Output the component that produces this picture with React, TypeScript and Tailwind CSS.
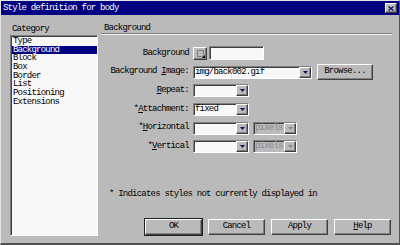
import React from 'react';

const raised =
  'border border-t-white border-l-white border-b-[#404040] border-r-[#404040] shadow-[inset_-1px_-1px_0_#808080]';
const sunken =
  'border border-t-[#808080] border-l-[#808080] border-b-white border-r-white shadow-[inset_1px_1px_0_#404040]';

const CATEGORIES = ['Type', 'Background', 'Block', 'Box', 'Border', 'List', 'Positioning', 'Extensions'];

function Arrow({ disabled }: { disabled?: boolean }) {
  return (
    <div className={`w-[12px] h-full bg-[#bababa] flex items-center justify-center ${raised}`}>
      <svg width="5" height="3" viewBox="0 0 5 3">
        <polygon points="0,0 5,0 2.5,3" fill={disabled ? '#8a8a8a' : '#10106a'} />
      </svg>
    </div>
  );
}

function Select({ value, width, disabled }: { value?: string; width: string; disabled?: boolean }) {
  return (
    <div
      className={`${width} h-[13px] flex items-stretch ${sunken} ${
        disabled ? 'bg-[#bababa] text-[#8a8a8a]' : 'bg-[#f8f8f8] text-black'
      }`}
    >
      <div className="flex-1 pl-[1px] leading-[11px] overflow-hidden whitespace-nowrap">{value}</div>
      <Arrow disabled={disabled} />
    </div>
  );
}

function Label({ children }: { children: React.ReactNode }) {
  return <div className="w-[88px] text-right whitespace-nowrap">{children}</div>;
}

function Row({ children }: { children: React.ReactNode }) {
  return <div className="h-[18.7px] flex items-center">{children}</div>;
}

function Btn({ children, isDefault }: { children: React.ReactNode; isDefault?: boolean }) {
  return (
    <div
      className={`w-[57px] h-[16px] flex items-center justify-center bg-[#bababa] ${
        isDefault ? 'outline outline-1 outline-[#202020]' : ''
      } ${raised}`}
    >
      {children}
    </div>
  );
}

export default function App() {
  return (
    <div className="w-[400px] h-[245px] bg-[#bababa] border-t border-l border-t-[#e4e4e4] border-l-[#e4e4e4] border-r border-r-[#505050] border-b-2 border-b-[#505050] font-['Liberation_Mono',monospace] text-[9px] tracking-[-0.78px] text-black flex flex-col overflow-hidden">
      {/* Title bar */}
      <div className="h-[14px] bg-[#000080] flex items-center justify-between pl-[2px] pr-[2px] shrink-0">
        <span className="text-white leading-[14px]">Style definition for body</span>
        <div className={`w-[12px] h-[10px] bg-[#c4c4c4] flex items-center justify-center ${raised}`}>
          <svg width="6" height="5" viewBox="0 0 6 5">
            <path d="M0.5 0.5 L5.5 4.5 M5.5 0.5 L0.5 4.5" stroke="#10106a" strokeWidth="1.4" />
          </svg>
        </div>
      </div>

      <div className="flex pl-[9px]">
        {/* Category column */}
        <div className="w-[88px] flex flex-col">
          <div className="mt-[8px] h-[12px] leading-[12px] pl-[2px]">Category</div>
          <div className={`h-[201px] bg-[#f8f8f8] pl-[1px] pt-[1px] ${sunken}`}>
            {CATEGORIES.map((c) => (
              <div
                key={c}
                className={`h-[8.7px] leading-[8.7px] pl-[1px] whitespace-nowrap ${
                  c === 'Background' ? 'bg-[#000080] text-white' : ''
                }`}
              >
                {c}
              </div>
            ))}
          </div>
        </div>

        {/* Panel */}
        <div className="ml-[3px] w-[291px] flex flex-col">
          <div className="mt-[8px] h-[10px] leading-[10px] pl-[3px]">Background</div>
          <div className="h-[2px] border-t border-t-[#808080] border-b border-b-[#f0f0f0]" />

          <div className="mt-[9px] flex flex-col">
            <Row>
              <Label>Background</Label>
              <div className={`ml-[4px] w-[14px] h-[13px] bg-[#bababa] relative flex items-center justify-center ${raised}`}>
                <div className="w-[7px] h-[7px] border border-[#808080]" />
                <svg className="absolute right-[1px] bottom-[1px]" width="3" height="3" viewBox="0 0 3 3">
                  <polygon points="3,0 3,3 0,3" fill="#000" />
                </svg>
              </div>
              <div className={`ml-[2px] w-[55px] h-[14px] bg-[#f8f8f8] ${sunken}`} />
            </Row>
            <Row>
              <Label>
                Background <span className="underline">I</span>mage:
              </Label>
              <div className="ml-[4px]">
                <Select value="img/back002.gif" width="w-[119px]" />
              </div>
              <div className={`ml-[5px] w-[56px] h-[16px] flex items-center justify-center bg-[#bababa] border-r-[#10106a] ${raised}`}>
                Browse...
              </div>
            </Row>
            <Row>
              <Label>
                <span className="underline">R</span>epeat:
              </Label>
              <div className="ml-[4px]">
                <Select width="w-[56px]" />
              </div>
            </Row>
            <Row>
              <Label>
                *<span className="underline">A</span>ttachment:
              </Label>
              <div className="ml-[4px]">
                <Select value="fixed" width="w-[56px]" />
              </div>
            </Row>
            <Row>
              <Label>
                *<span className="underline">H</span>orizontal
              </Label>
              <div className="ml-[4px] flex gap-[4px]">
                <Select width="w-[56px]" />
                <Select value="pixels" width="w-[44px]" disabled />
              </div>
            </Row>
            <Row>
              <Label>
                *<span className="underline">V</span>ertical
              </Label>
              <div className="ml-[4px] flex gap-[4px]">
                <Select width="w-[56px]" />
                <Select value="pixels" width="w-[44px]" disabled />
              </div>
            </Row>
          </div>

          <div className="mt-[33px] h-[10px] leading-[10px] pl-[8px] whitespace-nowrap">
            * Indicates styles not currently displayed in
          </div>

          <div className="mt-[20px] flex justify-end gap-[6px] pr-[1px]">
            <Btn isDefault>OK</Btn>
            <Btn>Cancel</Btn>
            <Btn>Apply</Btn>
            <Btn>
              <span>
                <span className="underline">H</span>elp
              </span>
            </Btn>
          </div>
        </div>
      </div>
    </div>
  );
}
